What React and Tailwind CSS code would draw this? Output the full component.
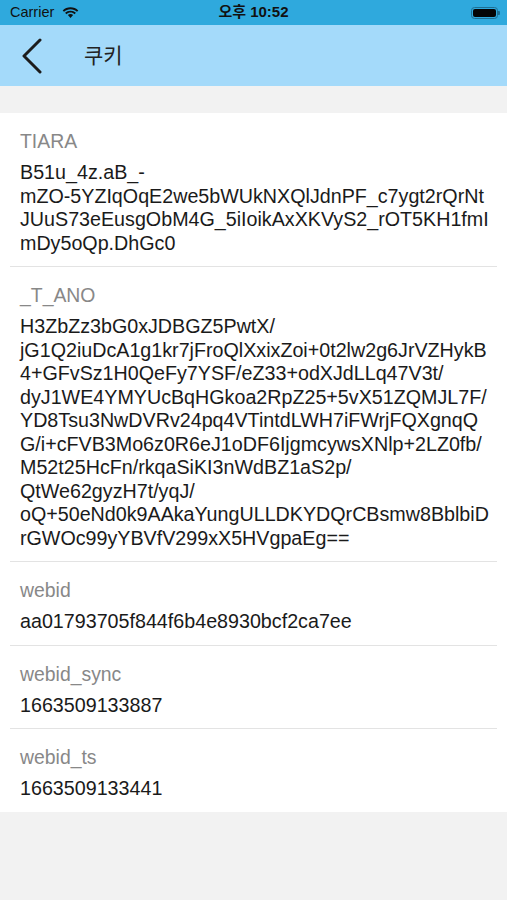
import React from 'react'

const cookies = [
    {
        name: 'TIARA',
        lines: [
            'B51u_4z.aB_-',
            'mZO-5YZIqOqE2we5bWUkNXQlJdnPF_c7ygt2rQrNt',
            'JUuS73eEusgObM4G_5iIoikAxXKVyS2_rOT5KH1fmI',
            'mDy5oQp.DhGc0',
        ],
    },
    {
        name: '_T_ANO',
        lines: [
            'H3ZbZz3bG0xJDBGZ5PwtX/',
            'jG1Q2iuDcA1g1kr7jFroQlXxixZoi+0t2lw2g6JrVZHykB',
            '4+GFvSz1H0QeFy7YSF/eZ33+odXJdLLq47V3t/',
            'dyJ1WE4YMYUcBqHGkoa2RpZ25+5vX51ZQMJL7F/',
            'YD8Tsu3NwDVRv24pq4VTintdLWH7iFWrjFQXgnqQ',
            'G/i+cFVB3Mo6z0R6eJ1oDF6IjgmcywsXNlp+2LZ0fb/',
            'M52t25HcFn/rkqaSiKI3nWdBZ1aS2p/',
            'QtWe62gyzH7t/yqJ/',
            'oQ+50eNd0k9AAkaYungULLDKYDQrCBsmw8BblbiD',
            'rGWOc99yYBVfV299xX5HVgpaEg==',
        ],
    },
    { name: 'webid', lines: ['aa01793705f844f6b4e8930bcf2ca7ee'] },
    { name: 'webid_sync', lines: ['1663509133887'] },
    { name: 'webid_ts', lines: ['1663509133441'] },
]

function Wifi() {
    return (
        <svg width="17" height="12" viewBox="0 0 17 12" className="ml-[8px]">
            <path d="M8.5 2.2c2.5 0 4.8 1 6.5 2.6l1.3-1.4C14.3 1.5 11.5.3 8.5.3S2.7 1.5.7 3.4L2 4.8c1.7-1.6 4-2.6 6.5-2.6z" fill="#111" />
            <path d="M8.5 5.6c1.6 0 3 .6 4.1 1.6l1.3-1.4C12.5 4.5 10.6 3.7 8.5 3.7S4.5 4.5 3.1 5.8l1.3 1.4c1.1-1 2.5-1.6 4.1-1.6z" fill="#111" />
            <path d="M8.5 7.1c-1 0-1.9.4-2.6 1L8.5 11l2.6-2.9c-.7-.6-1.6-1-2.6-1z" fill="#111" />
        </svg>
    )
}

function Battery() {
    return (
        <div className="flex items-center">
            <div className="w-[27px] h-[12px] rounded-[3.5px] border border-[#1e6f93] p-[1px]">
                <div className="w-full h-full rounded-[2px] bg-[#050505]" />
            </div>
            <div className="w-[2px] h-[4px] rounded-r-[1px] bg-[#1e6f93]" />
        </div>
    )
}

export default function App() {
    return (
        <div className="w-[507px] h-[900px] bg-[#f2f2f2] font-['Liberation_Sans','Noto_Sans_CJK_KR',sans-serif]">
            <div className="h-[25px] bg-[#2fa9dd] flex items-center justify-between pl-[10px] pr-[7px] relative">
                <div className="flex items-center text-[14.5px] text-[#111]">
                    <span>Carrier</span>
                    <Wifi />
                </div>
                <div className="absolute left-0 right-0 text-center text-[15px] font-bold text-[#111] pointer-events-none">
                    오후 10:52
                </div>
                <Battery />
            </div>

            <div className="h-[61px] bg-[#a4dafa] flex items-center">
                <svg width="24" height="36" viewBox="0 0 24 36" className="ml-[20px]">
                    <path d="M20 2 L4 18 L20 34" stroke="#1c1c1c" strokeWidth="3" fill="none" strokeLinecap="round" strokeLinejoin="round" />
                </svg>
                <span className="ml-[40px] text-[21px] text-[#222]">쿠키</span>
            </div>

            <div className="h-[27px]" />

            <div className="bg-white">
                {cookies.map((c, i) => (
                    <div key={c.name} className="mx-[10px]">
                        {i > 0 && <div className="h-px bg-[#e3e3e3]" />}
                        <div className="px-[10px] pt-[16px] pb-[11px]">
                            <div className="text-[19.4px] leading-[24px] text-[#888888]">{c.name}</div>
                            <div className="mt-[8px] text-[19.7px] leading-[23.5px] text-[#1a1a1a] whitespace-nowrap">
                                {c.lines.map((l, j) => (
                                    <div key={j}>{l}</div>
                                ))}
                            </div>
                        </div>
                    </div>
                ))}
            </div>
        </div>
    )
}
